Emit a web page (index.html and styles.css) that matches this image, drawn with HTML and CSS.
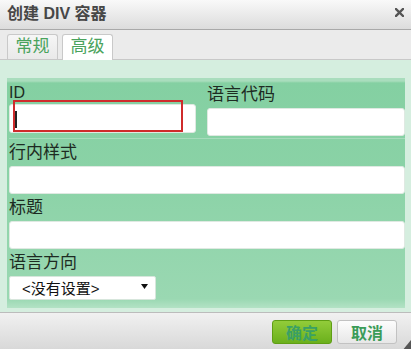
FILE: index.html
```html
<!doctype html>
<html lang="zh">
<head>
    <meta charset="utf-8">
    <title>创建 DIV 容器</title>
    <link rel="stylesheet" href="styles.css">
</head>
<body>
    <div class="dialog">
        <div class="titlebar">
            <span class="title">创建 DIV 容器</span>
            <svg class="close" width="9" height="9" viewBox="0 0 9 9">
                <path d="M1 1L8 8M8 1L1 8" stroke="#555" stroke-width="2.4" stroke-linecap="square"/>
            </svg>
        </div>
        <div class="tabs">
            <div class="tab">常规</div>
            <div class="tab active">高级</div>
        </div>
        <div class="content">
            <div class="panel">
                <div class="row two">
                    <div class="field">
                        <label class="lbl lbl-id" for="id">ID</label>
                        <div class="input input-id" id="id">
                            <span class="caret"></span>
                            <span class="focus"></span>
                        </div>
                    </div>
                    <div class="field">
                        <label class="lbl lbl-lang">语言代码</label>
                        <div class="input"></div>
                    </div>
                </div>
                <div class="row">
                    <label class="lbl">行内样式</label>
                    <div class="input"></div>
                </div>
                <div class="row">
                    <label class="lbl">标题</label>
                    <div class="input"></div>
                </div>
                <div class="row">
                    <label class="lbl">语言方向</label>
                    <div class="select">
                        <span>&lt;没有设置&gt;</span>
                        <svg width="7" height="5" viewBox="0 0 7 5"><path d="M0 0H7L3.5 5Z" fill="#111"/></svg>
                    </div>
                </div>
            </div>
        </div>
        <div class="footer">
            <button class="btn ok">确定</button>
            <button class="btn cancel">取消</button>
            <svg class="resize" width="9" height="11" viewBox="0 0 9 11"><path d="M9 0V11H0Z" fill="#555"/></svg>
        </div>
    </div>
</body>
</html>
```
FILE: styles.css
```css
body {
    margin: 0;
    font-family: "Liberation Sans", "Noto Sans CJK SC", sans-serif;
}
.dialog {
    width: 411px;
    height: 349px;
    overflow: hidden;
    position: relative;
}
.titlebar {
    height: 29px;
    border-bottom: 1px solid #a9a9a9;
    background: linear-gradient(#f9f9f9, #dcdcdc);
    display: flex;
    align-items: center;
    justify-content: space-between;
    padding: 0 7px;
}
.title {
    font-size: 16px;
    font-weight: bold;
    color: #474747;
    line-height: 29px;
    margin-top: -3px;
}
.close {
    margin-top: -4px;
}
.tabs {
    height: 29px;
    background: #ebebeb;
    border-bottom: 1px solid #c8c8c8;
    display: flex;
    align-items: flex-end;
    gap: 4px;
    padding-left: 7px;
}
.tab {
    width: 49px;
    height: 24px;
    border: 1px solid #c9c9c9;
    border-bottom: none;
    border-radius: 3px 3px 0 0;
    background: linear-gradient(#f6f6f6, #e9e9e9);
    color: #4aa35d;
    font-size: 17px;
    line-height: 24px;
    text-align: center;
}
.tab.active {
    background: #fff;
    height: 25px;
    margin-bottom: -1px;
}
.content {
    background: #d5eedf;
    padding: 18px 6px 4px 7px;
}
.panel {
    background: linear-gradient(#a9ddbd 0, #a9ddbd 3px, #84d0a2 5px, #8ad2a6 40%, #9ad8b2 96%, #b3e2c5 100%);
    padding: 3px 0 8px 2px;
}
.row {
    display: flex;
    flex-direction: column;
}
.row.two {
    flex-direction: row;
    gap: 11px;
    align-items: flex-end;
    padding-bottom: 2px;
    border-bottom: 1px solid #a6dbbb;
}
.field {
    display: flex;
    flex-direction: column;
}
.field:first-child {
    width: 187px;
    padding-bottom: 3px;
}
.field:last-child {
    flex: 1;
}
.lbl {
    font-size: 17px;
    color: #1d2b22;
    line-height: 27px;
    height: 27px;
}
.lbl-id {
    font-size: 16px;
    line-height: 23px;
    height: 23px;
}
.input {
    height: 28px;
    background: #fff;
    border: 1px solid #dfe9e2;
    border-radius: 3px;
    box-sizing: border-box;
}
.input-id {
    height: 29px;
    position: relative;
}
.caret {
    position: absolute;
    left: 5px;
    top: 6px;
    width: 2px;
    height: 17px;
    background: #222;
}
.focus {
    position: absolute;
    left: 3px;
    top: -5px;
    width: 170px;
    height: 32px;
    border: 2px solid #cf2b2b;
    box-sizing: border-box;
}
.select {
    width: 147px;
    height: 24px;
    background: #fff;
    border: 1px solid #d7e6dc;
    border-radius: 2px;
    box-sizing: border-box;
    display: flex;
    justify-content: space-between;
    align-items: flex-start;
    padding: 0 7px 0 12px;
}
.select span {
    font-size: 15px;
    line-height: 20px;
    padding-top: 2px;
    color: #111;
}
.select svg {
    margin-top: 7px;
}
.footer {
    height: 39px;
    border-top: 1px solid #bcbcbc;
    background: linear-gradient(#f1f1f1, #d7d7d7);
    display: flex;
    justify-content: flex-end;
    align-items: flex-start;
    gap: 5px;
    padding: 7px 14px 0 0;
    box-sizing: border-box;
    position: relative;
}
.btn {
    width: 60px;
    height: 24px;
    border-radius: 3px;
    font-family: "Noto Sans CJK SC", sans-serif;
    font-size: 16px;
    font-weight: bold;
    line-height: 20px;
    padding: 0;
    color: #3b9c58;
}
.ok {
    background: linear-gradient(#92cc3a, #6bb01c);
    border: 1px solid #5f9e14;
    color: #3aa066;
}
.cancel {
    background: linear-gradient(#fdfdfd, #e7e7e7);
    border: 1px solid #c2c2c2;
}
.resize {
    position: absolute;
    right: 0;
    bottom: 0;
}
```
